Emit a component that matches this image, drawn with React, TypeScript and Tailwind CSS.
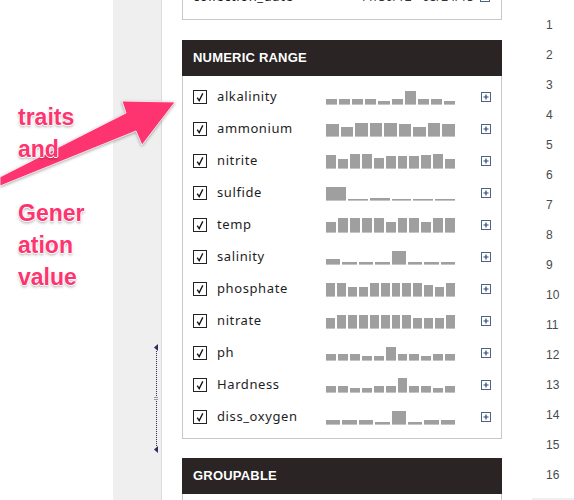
import React from 'react';

type Trait = { name: string; bins: number[] };

const traits: Trait[] = [
  { name: 'alkalinity', bins: [6, 6, 6, 6, 4, 6, 14, 6, 6, 4] },
  { name: 'ammonium', bins: [13, 10, 14, 14, 14, 13, 10, 14, 13] },
  { name: 'nitrite', bins: [14, 10, 15, 15, 11, 13, 13, 13, 14, 15, 10] },
  { name: 'sulfide', bins: [14, 2, 3, 2, 2, 2] },
  { name: 'temp', bins: [11, 15, 15, 15, 15, 11, 15, 15, 11, 15, 15] },
  { name: 'salinity', bins: [6, 3, 3, 3, 14, 3, 3, 3] },
  { name: 'phosphate', bins: [14, 14, 10, 10, 14, 14, 14, 14, 14, 12, 10, 14] },
  { name: 'nitrate', bins: [11, 14, 14, 14, 14, 14, 14, 14, 11, 11, 11, 14] },
  { name: 'ph', bins: [7, 7, 7, 5, 5, 14, 7, 7, 5, 7, 7] },
  { name: 'Hardness', bins: [7, 7, 5, 5, 7, 7, 15, 7, 7, 5, 7] },
  { name: 'diss_oxygen', bins: [5, 5, 5, 3, 14, 3, 5, 5] },
];

const PlusBox = () => (
  <svg width="10" height="10" viewBox="0 0 10 10" className="shrink-0">
    <rect x="0.5" y="0.5" width="9" height="9" fill="none" stroke="#4b6580" strokeWidth="1" />
    <path d="M2.5 5 H7.5 M5 2.5 V7.5" stroke="#2f4a66" strokeWidth="1.2" />
  </svg>
);

const Check = () => (
  <div className="w-[14px] h-[14px] border border-[#222] bg-white flex items-center justify-center shrink-0">
    <svg width="10" height="10" viewBox="0 0 10 10">
      <path d="M2.2 5.6 L4.2 8.6 L7.8 1.4" fill="none" stroke="#111" strokeWidth="1.3" />
    </svg>
  </div>
);

const Histogram = ({ bins }: { bins: number[] }) => (
  <div className="w-[130px] h-[16px] flex items-end gap-[2px]">
    {bins.map((h, i) => (
      <div key={i} className="flex-1 bg-[#9f9f9f] border-b border-[#c4c4c4]" style={{ height: h }} />
    ))}
  </div>
);

const TraitRow = ({ t }: { t: Trait }) => (
  <div className="h-[32px] flex items-center">
    <Check />
    <div className="w-[110px] ml-[10px] text-[13px] tracking-[0.6px] text-[#1e1e1e] font-['Noto_Sans',sans-serif]">
      {t.name}
    </div>
    <Histogram bins={t.bins} />
    <div className="ml-[26px]">
      <PlusBox />
    </div>
  </div>
);

const Header = ({ title }: { title: string }) => (
  <div className="h-[36px] bg-[#2a2424] flex items-center px-[11px] text-white text-[13px] font-bold tracking-[0.2px] font-['Liberation_Sans',Arial,sans-serif]">
    {title}
  </div>
);

export default function App() {
  const lines = Array.from({ length: 17 }, (_, i) => i + 1);

  return (
    <div className="relative flex h-[500px] w-[574px] overflow-hidden bg-white">
      {/* left blank */}
      <div className="w-[113px] shrink-0" />

      {/* gutter with resize handle */}
      <div className="w-[49px] shrink-0 bg-[#efefef] border-r border-[#dcdcdc] flex flex-col items-end pr-[3px] pt-[344px]">
        <svg width="4" height="7" viewBox="0 0 4 7">
          <polygon points="0,3.5 4,0 4,7" fill="#2d2d62" />
        </svg>
        <div className="relative mr-[1px] h-[95px] border-l border-dotted border-[#2d2d62]">
          <div className="absolute left-[-3px] top-[46px] w-[4px] h-[3px] border-y border-[#9a9a9a]" />
        </div>
        <svg width="4" height="7" viewBox="0 0 4 7">
          <polygon points="0,3.5 4,0 4,7" fill="#2d2d62" />
        </svg>
      </div>

      {/* panels */}
      <div className="w-[370px] shrink-0 pl-[20px]">
        <div className="w-[320px] -mt-[23px] border-x border-b border-[#c8c8c8] pt-[4px] pb-[6px] px-[10px]">
          <div className="h-[32px] flex items-center whitespace-nowrap">
            <div className="w-[167px] text-[13px] tracking-[0.6px] text-[#1e1e1e] font-['Noto_Sans',sans-serif]">
              collection_date
            </div>
            <div className="w-[120px] text-[12px] tracking-[0.2px] text-[#333] font-['Noto_Sans',sans-serif]">
              11/30/12 - 08/24/15
            </div>
            <PlusBox />
          </div>
        </div>

        <div className="w-[320px] mt-[20px]">
          <Header title="NUMERIC RANGE" />
          <div className="border-x border-b border-[#c8c8c8] pt-[5px] pb-[5px] px-[10px]">
            {traits.map((t) => (
              <TraitRow key={t.name} t={t} />
            ))}
          </div>
        </div>

        <div className="w-[320px] mt-[19px]">
          <Header title="GROUPABLE" />
          <div className="h-[40px] border-x border-[#c8c8c8]" />
        </div>
      </div>

      {/* line numbers */}
      <div className="w-[42px] shrink-0 pt-[18px] font-['Liberation_Sans',Arial,sans-serif] text-[12px] text-[#4a4a4a]">
        {lines.map((n) => (
          <div key={n} className={`h-[30px] leading-[10px] pl-[14px] ${n === 17 ? 'bg-[#efefef] pt-[7px]' : 'pt-[2px]'}`}>
            {n}
          </div>
        ))}
      </div>

      {/* annotation overlay */}
      <svg
        className="absolute left-0 top-0 pointer-events-none [filter:drop-shadow(0_1px_1.5px_rgba(0,0,0,0.35))]"
        width="200"
        height="200"
        viewBox="0 0 200 200"
      >
        <polygon
          points="0,177 126,113 122,101 175,102 142,145 136,131 0,186"
          fill="#fe3470"
          stroke="#ffffff"
          strokeWidth="0.8"
        />
      </svg>
      <div className="absolute left-[18px] top-[101px] font-['Liberation_Sans',Arial,sans-serif] font-bold text-[23px] leading-[32px] text-[#fe3470] [text-shadow:1px_0_0_#fff,-1px_0_0_#fff,0_1px_0_#fff,0_-1px_0_#fff,0_2px_3px_rgba(0,0,0,0.35)]">
        <div>traits</div>
        <div>and</div>
        <div className="h-[32px]" />
        <div>Gener</div>
        <div>ation</div>
        <div>value</div>
      </div>
    </div>
  );
}
